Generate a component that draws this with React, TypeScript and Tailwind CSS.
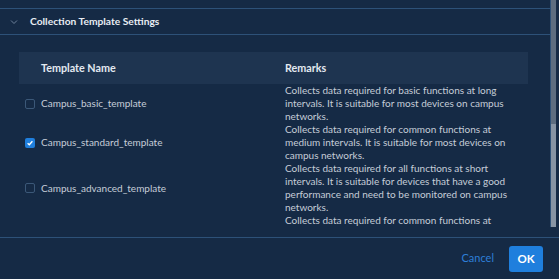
import React from "react";

interface Row {
  name: string;
  remark: string;
  checked: boolean;
}

const rows: Row[] = [
  {
    name: "Campus_basic_template",
    remark:
      "Collects data required for basic functions at long intervals. It is suitable for most devices on campus networks.",
    checked: false,
  },
  {
    name: "Campus_standard_template",
    remark:
      "Collects data required for common functions at medium intervals. It is suitable for most devices on campus networks.",
    checked: true,
  },
  {
    name: "Campus_advanced_template",
    remark:
      "Collects data required for all functions at short intervals. It is suitable for devices that have a good performance and need to be monitored on campus networks.",
    checked: false,
  },
  {
    name: "Campus_custom_template",
    remark:
      "Collects data required for common functions at medium intervals. It is suitable for most devices on campus networks.",
    checked: false,
  },
];

const Checkbox = ({ checked }: { checked: boolean }) =>
  checked ? (
    <span className="w-[10px] h-[10px] shrink-0 rounded-[2px] bg-[#1f7fdd] flex items-center justify-center">
      <svg width="8" height="8" viewBox="0 0 8 8">
        <path d="M1.6 4.2 L3.3 5.8 L6.4 2.3" fill="none" stroke="#ffffff" strokeWidth="1.3" />
      </svg>
    </span>
  ) : (
    <span className="w-[10px] h-[10px] shrink-0 rounded-[2px] border border-[#3b5878] bg-transparent" />
  );

const App = () => {
  return (
    <div
      className="w-[559px] h-[279px] bg-[#152a45] flex flex-col overflow-hidden"
      style={{ fontFamily: 'Lato, "Noto Sans", sans-serif' }}
    >
      <div className="flex h-[227px] shrink-0">
        <div className="flex-1 flex flex-col pt-[8px] overflow-hidden">
          <div className="h-[27px] shrink-0 border-y border-[#2d5178] flex items-center">
            <svg width="8" height="6" viewBox="0 0 8 6" className="ml-[10px]">
              <path d="M1 1.5 L4 4.5 L7 1.5" fill="none" stroke="#6d819a" strokeWidth="1" />
            </svg>
            <span className="ml-[12px] text-[10.25px] font-bold text-[#e8edf3]">
              Collection Template Settings
            </span>
          </div>
          <div className="shrink-0 pt-[17px] pl-[19px] pr-[22px]">
            <div className="h-[32px] bg-[#1e3450] flex items-center text-[10.75px] font-bold text-[#e3e9f0]">
              <span className="w-[244px] pl-[22px]">Template Name</span>
              <span className="pl-[22px]">Remarks</span>
            </div>
            {rows.map((r) => (
              <div key={r.remark + r.name} className="flex text-[10px] leading-[13px] text-[#c5cdd8]">
                <div className="w-[244px] pl-[6px] flex items-center gap-[6px]">
                  <Checkbox checked={r.checked} />
                  <span>{r.name}</span>
                </div>
                <div className="flex-1 pl-[22px] pr-[8px]">{r.remark}</div>
              </div>
            ))}
          </div>
        </div>
        <div className="w-[9px] flex">
          <div className="w-[1px] bg-[#2d5178]" />
          <div className="w-[5px] flex flex-col bg-[#5d6d80]">
            <div className="mt-[124px] h-[103px] bg-[#8794a4]" />
          </div>
        </div>
      </div>
      <div className="h-[10px] shrink-0" />
      <div className="border-t border-[#2d5178] flex-1 flex items-center justify-end pr-[16px] gap-[15px]">
        <span className="text-[11px] text-[#2d7fd8]">Cancel</span>
        <button className="w-[34px] h-[26px] rounded-[3px] bg-[#1f7fdd] text-white text-[11.5px] font-bold">
          OK
        </button>
      </div>
    </div>
  );
};

export default App;
